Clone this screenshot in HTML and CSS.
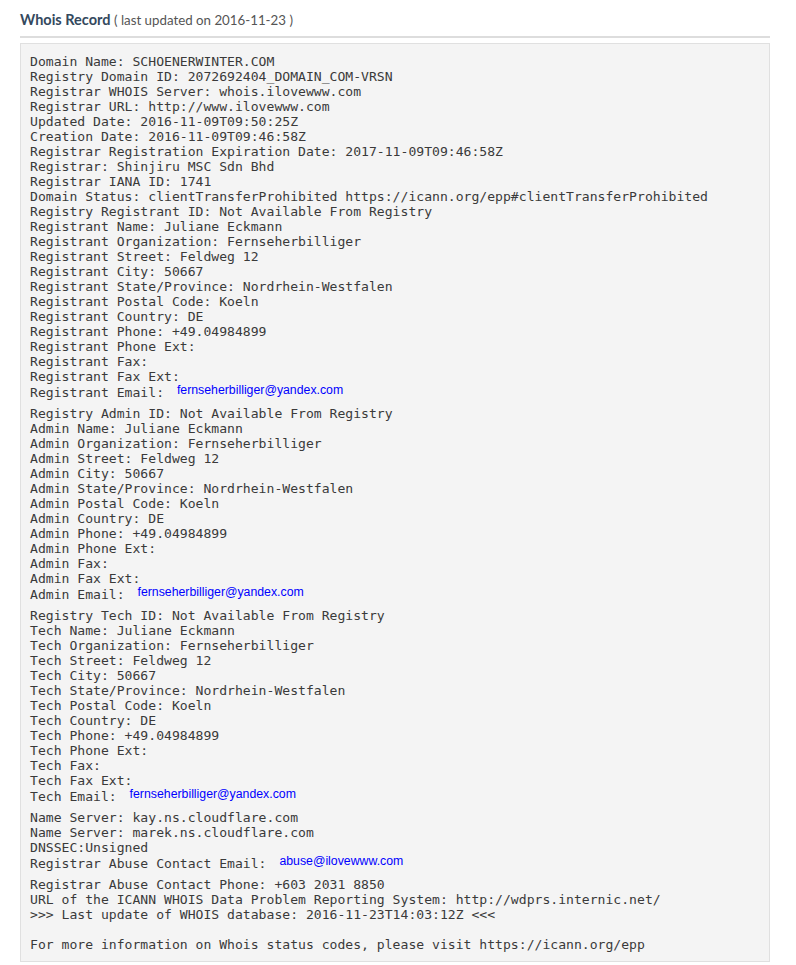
FILE: index.html
```html
<!DOCTYPE html>
<html lang="en">
<head>
    <meta charset="UTF-8">
    <meta name="viewport" content="width=device-width, initial-scale=1.0">
    <title>Whois Record</title>
    <link rel="stylesheet" href="styles.css">
</head>
<body>
    <section class="whois">
        <h3 class="whois-title">Whois Record <small>( last updated on 2016-11-23 )</small></h3>
        <div class="whois-box">
<pre class="whois-data">Domain Name: SCHOENERWINTER.COM
Registry Domain ID: 2072692404_DOMAIN_COM-VRSN
Registrar WHOIS Server: whois.ilovewww.com
Registrar URL: http://www.ilovewww.com
Updated Date: 2016-11-09T09:50:25Z
Creation Date: 2016-11-09T09:46:58Z
Registrar Registration Expiration Date: 2017-11-09T09:46:58Z
Registrar: Shinjiru MSC Sdn Bhd
Registrar IANA ID: 1741
Domain Status: clientTransferProhibited https://icann.org/epp#clientTransferProhibited
Registry Registrant ID: Not Available From Registry
Registrant Name: Juliane Eckmann
Registrant Organization: Fernseherbilliger
Registrant Street: Feldweg 12
Registrant City: 50667
Registrant State/Province: Nordrhein-Westfalen
Registrant Postal Code: Koeln
Registrant Country: DE
Registrant Phone: +49.04984899
Registrant Phone Ext:
Registrant Fax:
Registrant Fax Ext:
Registrant Email: <span class="email">fernseherbilliger@yandex.com</span>
Registry Admin ID: Not Available From Registry
Admin Name: Juliane Eckmann
Admin Organization: Fernseherbilliger
Admin Street: Feldweg 12
Admin City: 50667
Admin State/Province: Nordrhein-Westfalen
Admin Postal Code: Koeln
Admin Country: DE
Admin Phone: +49.04984899
Admin Phone Ext:
Admin Fax:
Admin Fax Ext:
Admin Email: <span class="email">fernseherbilliger@yandex.com</span>
Registry Tech ID: Not Available From Registry
Tech Name: Juliane Eckmann
Tech Organization: Fernseherbilliger
Tech Street: Feldweg 12
Tech City: 50667
Tech State/Province: Nordrhein-Westfalen
Tech Postal Code: Koeln
Tech Country: DE
Tech Phone: +49.04984899
Tech Phone Ext:
Tech Fax:
Tech Fax Ext:
Tech Email: <span class="email">fernseherbilliger@yandex.com</span>
Name Server: kay.ns.cloudflare.com
Name Server: marek.ns.cloudflare.com
DNSSEC:Unsigned
Registrar Abuse Contact Email: <span class="email">abuse@ilovewww.com</span>
Registrar Abuse Contact Phone: +603 2031 8850
URL of the ICANN WHOIS Data Problem Reporting System: http://wdprs.internic.net/
&gt;&gt;&gt; Last update of WHOIS database: 2016-11-23T14:03:12Z &lt;&lt;&lt;

For more information on Whois status codes, please visit https://icann.org/epp</pre>
        </div>
    </section>
</body>
</html>
```

FILE: styles.css
```css
* {
    margin: 0;
    padding: 0;
    box-sizing: border-box;
}

body {
    font-family: Lato, 'Open Sans', sans-serif;
    background: #ffffff;
    color: #333333;
}

.whois {
    padding: 0 26px 0 20px;
}

.whois-title {
    font-size: 14.5px;
    font-weight: 700;
    line-height: 20px;
    color: #34495e;
    padding: 10px 0 6px;
    border-bottom: 2px solid #dddddd;
}

.whois-title small {
    font-size: 13.3px;
    font-weight: 400;
    line-height: 1;
    color: #555555;
}

.whois-box {
    margin-top: 5px;
    background: #f4f4f4;
    border: 1px solid #e0e0e0;
    padding: 10px 9px 9px;
}

.whois-data {
    font-family: 'DejaVu Sans Mono', 'Liberation Mono', monospace;
    font-size: 13.1px;
    line-height: 15px;
    color: #3a3a3a;
    white-space: pre;
}

/* emails were images in the original, so they sit a bit higher and make the row taller */
.email {
    display: inline-block;
    vertical-align: 2.5px;
    line-height: 13px;
    padding-bottom: 9px;
    margin-left: 5px;
    font-family: 'Liberation Sans', Arial, sans-serif;
    font-size: 12.3px;
    color: #0000ff;
}
```
